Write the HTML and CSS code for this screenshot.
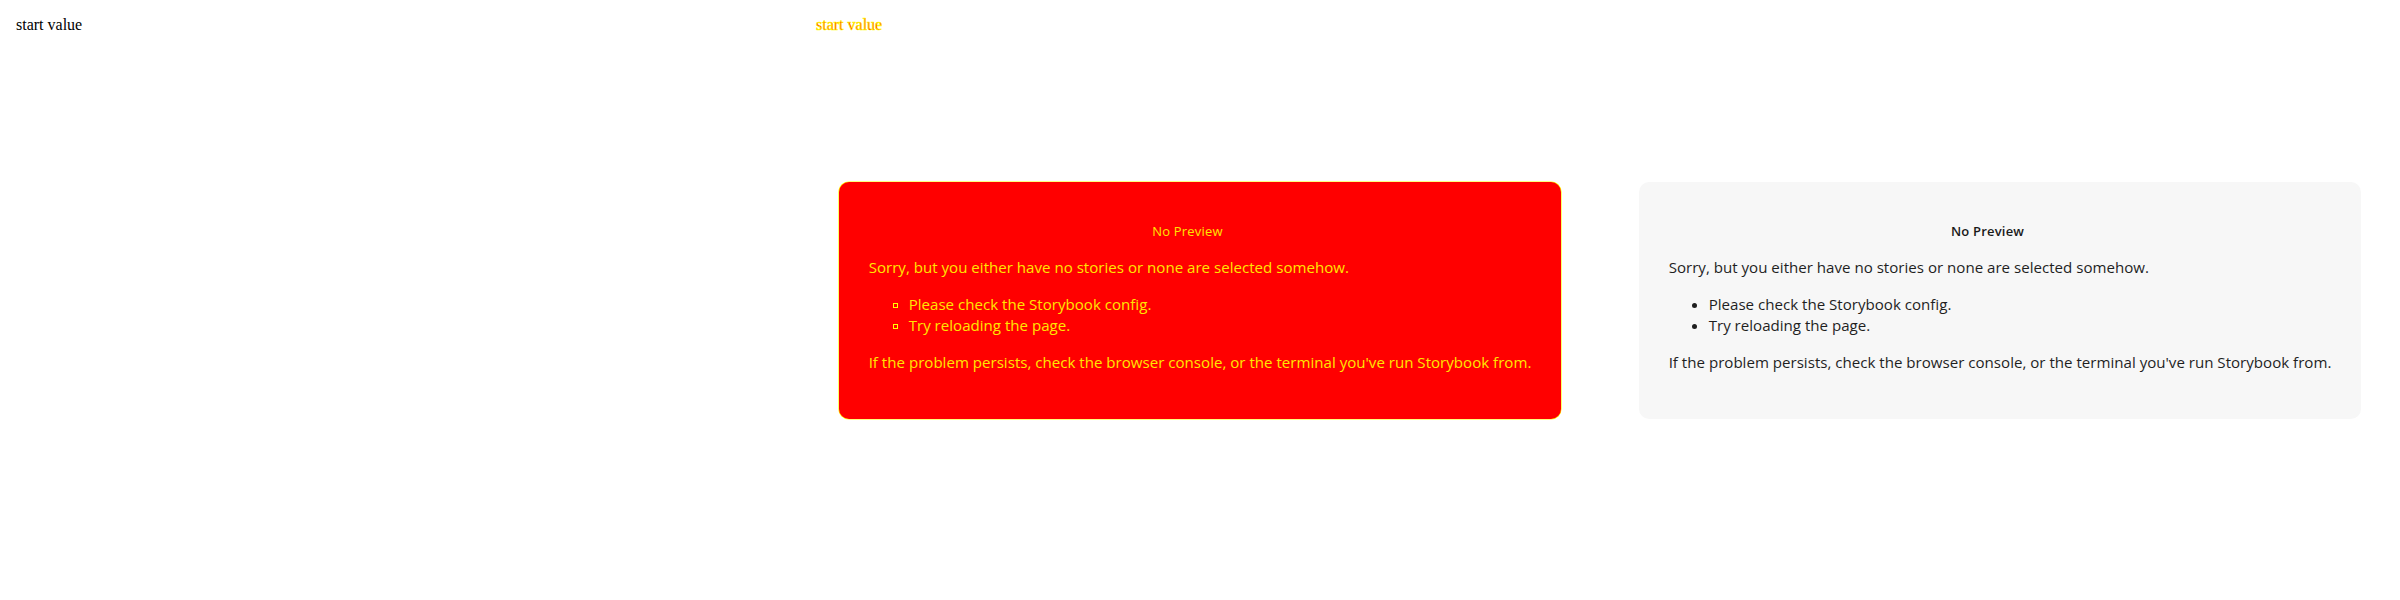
FILE: index.html
```html
<!DOCTYPE html>
<html>
<head>
<meta charset="utf-8">
<title>No Preview</title>
<link rel="stylesheet" href="styles.css">
</head>
<body>
<div class="panes">
  <section class="pane">
    <div class="label">start value</div>
  </section>
  <section class="pane pane-diff">
    <div class="label">start value</div>
    <div class="wrapper">
      <div class="card">
        <h1 class="heading">No Preview</h1>
        <p>Sorry, but you either have no stories or none are selected somehow.</p>
        <ul>
          <li>Please check the Storybook config.</li>
          <li>Try reloading the page.</li>
        </ul>
        <p>If the problem persists, check the browser console, or the terminal you've run Storybook from.</p>
      </div>
    </div>
  </section>
  <section class="pane">
    <div class="wrapper">
      <div class="card">
        <h1 class="heading">No Preview</h1>
        <p>Sorry, but you either have no stories or none are selected somehow.</p>
        <ul>
          <li>Please check the Storybook config.</li>
          <li>Try reloading the page.</li>
        </ul>
        <p>If the problem persists, check the browser console, or the terminal you've run Storybook from.</p>
      </div>
    </div>
  </section>
</div>
</body>
</html>
```
FILE: styles.css
```css
html, body {
  margin: 0;
  padding: 0;
  background: #ffffff;
}

.panes {
  display: grid;
  grid-template-columns: 800px 800px 800px;
  height: 600px;
}

.pane {
  display: grid;
  grid-template-columns: 800px;
  grid-template-rows: 600px;
  overflow: hidden;
}

.pane > * {
  grid-area: 1 / 1;
}

.label {
  align-self: start;
  padding: 16px 16px;
  font-family: "Liberation Serif", "Times New Roman", serif;
  font-size: 16px;
  line-height: 18px;
  color: #000000;
}

.wrapper {
  display: flex;
  align-items: center;
  justify-content: center;
  padding: 40px;
  box-sizing: border-box;
  font-family: "Open Sans", "Noto Sans", sans-serif;
  color: #1f1f1f;
}

.card {
  margin: auto;
  padding: 30px;
  border-radius: 10px;
  background: #f7f7f7;
  font-size: 15.1px;
  line-height: 21px;
  white-space: nowrap;
}

.heading {
  margin: 10px 0;
  padding-right: 25px;
  text-align: center;
  font-size: 13px;
  line-height: 19px;
  font-weight: 600;
  letter-spacing: 0.2px;
  color: #1a1a1a;
}

.card p {
  margin: 16px 0;
}

.card ul {
  margin: 16px 0;
  padding-left: 40px;
}

/* diff pane */
.pane-diff .label {
  color: #ff0000;
  -webkit-text-stroke: 0.6px #ffff00;
}

.pane-diff .card {
  background: #ff0000;
  color: #ffe600;
  box-shadow: 0 0 0 0.6px #ffff00;
}

.pane-diff .heading {
  color: #ffe600;
  font-weight: 400;
}

.pane-diff .card li {
  list-style: none;
}

.pane-diff .card li::before {
  content: "";
  display: inline-block;
  box-sizing: border-box;
  width: 5px;
  height: 5px;
  border: 1px solid #ffff00;
  margin-left: -16px;
  margin-right: 11px;
  vertical-align: middle;
}
```
